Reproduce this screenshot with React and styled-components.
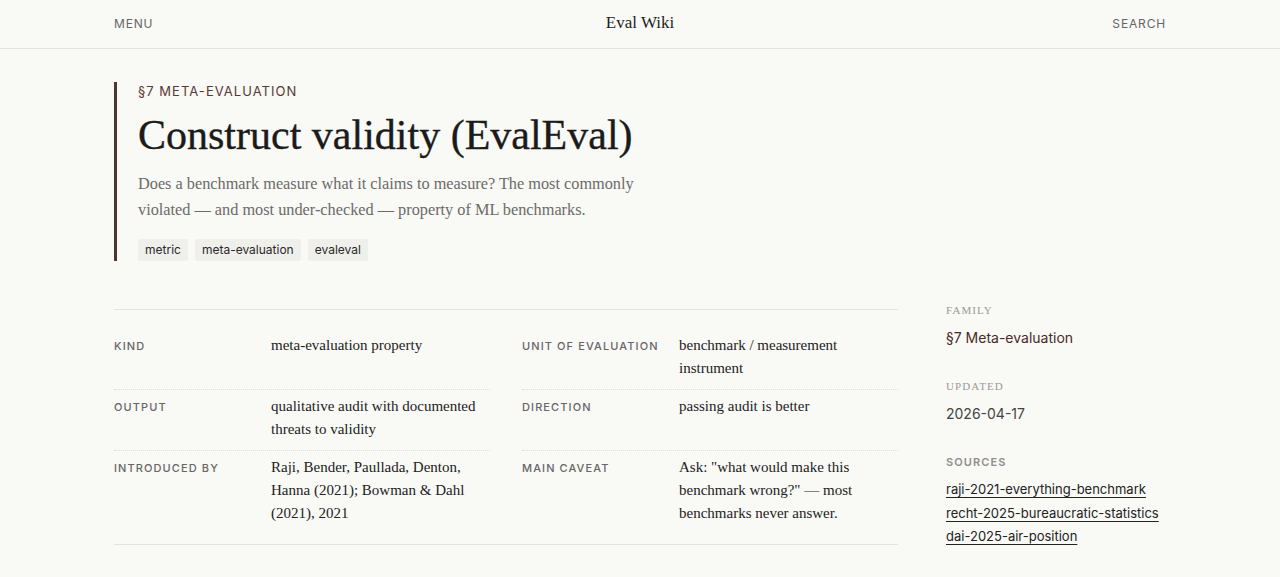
import React from "react";
import styled, { createGlobalStyle } from "styled-components";

const GlobalStyle = createGlobalStyle`
  html, body {
    margin: 0;
    padding: 0;
    background: #f9f9f6;
  }
  body {
    font-family: Inter, "Liberation Sans", sans-serif;
    color: #222;
  }
`;

const serif = `"Liberation Serif", "Times New Roman", serif`;
const sans = `Inter, "Liberation Sans", sans-serif`;

const Header = styled.header`
  height: 48px;
  border-bottom: 1px solid #e4e4df;
  display: flex;
  justify-content: center;
`;

const HeaderInner = styled.div`
  width: 1052px;
  display: grid;
  grid-template-columns: 1fr auto 1fr;
  align-items: center;
  padding-bottom: 2px;
`;

const NavLink = styled.a`
  font-family: ${sans};
  font-size: 12px;
  letter-spacing: 0.07em;
  color: #666;
  text-transform: uppercase;
  justify-self: ${(p) => (p.$end ? "end" : "start")};
  cursor: pointer;
`;

const Brand = styled.div`
  font-family: ${serif};
  font-size: 17px;
  color: #1d1d1d;
`;

const Page = styled.main`
  width: 1052px;
  margin: 0 auto;
  padding-top: 33px;
`;

const Hero = styled.section`
  border-left: 3px solid #4d3530;
  padding-left: 21px;
`;

const Eyebrow = styled.div`
  font-family: ${sans};
  font-size: 13px;
  line-height: 18px;
  letter-spacing: 0.08em;
  color: #5a3833;
  text-transform: uppercase;
`;

const Title = styled.h1`
  font-family: ${serif};
  font-weight: 400;
  font-size: 42px;
  line-height: 46px;
  margin: 12px 0 0;
  color: #1b1b1b;
  -webkit-text-stroke: 0.35px #1b1b1b;
`;

const Lede = styled.p`
  font-family: ${serif};
  font-size: 16.3px;
  line-height: 26px;
  color: #6b6b68;
  max-width: 520px;
  margin: 13px 0 0;
`;

const Tags = styled.div`
  display: flex;
  gap: 7px;
  margin-top: 16px;
`;

const Tag = styled.span`
  font-family: ${sans};
  font-size: 12px;
  line-height: 22px;
  padding: 0 7px;
  background: #efefec;
  color: #2a2a2a;
  border-radius: 2px;
`;

const Body = styled.div`
  display: grid;
  grid-template-columns: 784px 220px;
  gap: 48px;
  margin-top: 41px;
`;

const Facts = styled.div`
  margin-top: 7px;
  border-top: 1px solid #e4e4df;
  border-bottom: 1px solid #e4e4df;
  padding: 19px 0 10px;
  display: grid;
  grid-template-columns: 1fr 1fr;
  column-gap: 32px;
`;

const Fact = styled.div`
  display: grid;
  grid-template-columns: 157px 1fr;
  padding: 7px 0;
  border-bottom: ${(p) => (p.$last ? "none" : "1px dotted #dcdcd6")};
`;

const FactLabel = styled.div`
  font-family: ${sans};
  font-size: 11px;
  line-height: 21px;
  font-weight: 500;
  letter-spacing: 0.1em;
  text-transform: uppercase;
  color: #666;
`;

const FactValue = styled.div`
  font-family: ${serif};
  font-size: 15px;
  line-height: 23px;
  color: #222;
  margin-top: -2px;
  margin-bottom: 2px;
`;

const Aside = styled.aside`
  display: flex;
  flex-direction: column;
  gap: 29px;
`;

const MetaBlock = styled.div`
  display: flex;
  flex-direction: column;
`;

const MetaLabel = styled.div`
  font-family: ${(p) => (p.$sans ? sans : serif)};
  font-size: 11px;
  line-height: 16px;
  font-weight: ${(p) => (p.$sans ? 600 : 400)};
  letter-spacing: 0.1em;
  text-transform: uppercase;
  color: ${(p) => (p.$sans ? "#8f8f8c" : "#9a9a97")};
  margin-bottom: 9px;
`;

const MetaValue = styled.div`
  font-family: ${sans};
  font-size: 14px;
  line-height: 22px;
  color: ${(p) => p.$color || "#444"};
`;

const SourceList = styled.div`
  display: flex;
  flex-direction: column;
  margin-top: -1px;
`;

const Source = styled.a`
  font-family: ${sans};
  font-size: 13px;
  line-height: 23.5px;
  color: #222;
  text-decoration: underline;
  text-underline-offset: 3px;
  text-decoration-thickness: 1px;
  align-self: flex-start;
`;

const facts = [
  ["Kind", "meta-evaluation property"],
  ["Unit of evaluation", "benchmark / measurement instrument"],
  ["Output", "qualitative audit with documented threats to validity"],
  ["Direction", "passing audit is better"],
  ["Introduced by", "Raji, Bender, Paullada, Denton, Hanna (2021); Bowman & Dahl (2021), 2021"],
  ["Main caveat", "Ask: \"what would make this benchmark wrong?\" — most benchmarks never answer."],
];

const sources = [
  "raji-2021-everything-benchmark",
  "recht-2025-bureaucratic-statistics",
  "dai-2025-air-position",
];

export default function App() {
  return (
    <>
      <GlobalStyle />
      <Header>
        <HeaderInner>
          <NavLink>Menu</NavLink>
          <Brand>Eval Wiki</Brand>
          <NavLink $end>Search</NavLink>
        </HeaderInner>
      </Header>
      <Page>
        <Hero>
          <Eyebrow>§7 Meta-evaluation</Eyebrow>
          <Title>Construct validity (EvalEval)</Title>
          <Lede>
            Does a benchmark measure what it claims to measure? The most commonly
            violated — and most under-checked — property of ML benchmarks.
          </Lede>
          <Tags>
            <Tag>metric</Tag>
            <Tag>meta-evaluation</Tag>
            <Tag>evaleval</Tag>
          </Tags>
        </Hero>
        <Body>
          <div>
            <Facts>
              {facts.map(([label, value], i) => (
                <Fact key={label} $last={i >= facts.length - 2}>
                  <FactLabel>{label}</FactLabel>
                  <FactValue>{value}</FactValue>
                </Fact>
              ))}
            </Facts>
          </div>
          <Aside>
            <MetaBlock>
              <MetaLabel>Family</MetaLabel>
              <MetaValue $color="#4a2a25">§7 Meta-evaluation</MetaValue>
            </MetaBlock>
            <MetaBlock>
              <MetaLabel>Updated</MetaLabel>
              <MetaValue>2026-04-17</MetaValue>
            </MetaBlock>
            <MetaBlock>
              <MetaLabel $sans>Sources</MetaLabel>
              <SourceList>
                {sources.map((s) => (
                  <Source key={s}>{s}</Source>
                ))}
              </SourceList>
            </MetaBlock>
          </Aside>
        </Body>
      </Page>
    </>
  );
}
